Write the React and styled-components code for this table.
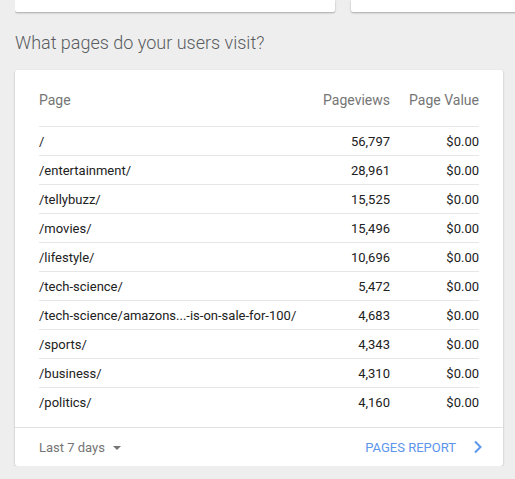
import React from "react";
import styled, { createGlobalStyle } from "styled-components";

const rows = [
  { page: "/", views: "56,797", value: "$0.00" },
  { page: "/entertainment/", views: "28,961", value: "$0.00" },
  { page: "/tellybuzz/", views: "15,525", value: "$0.00" },
  { page: "/movies/", views: "15,496", value: "$0.00" },
  { page: "/lifestyle/", views: "10,696", value: "$0.00" },
  { page: "/tech-science/", views: "5,472", value: "$0.00" },
  {
    page: "/tech-science/amazons...-is-on-sale-for-100/",
    views: "4,683",
    value: "$0.00"
  },
  { page: "/sports/", views: "4,343", value: "$0.00" },
  { page: "/business/", views: "4,310", value: "$0.00" },
  { page: "/politics/", views: "4,160", value: "$0.00" }
];

const GlobalStyle = createGlobalStyle`
  html, body {
    margin: 0;
    background: #eeeeee;
    font-family: Roboto, "Liberation Sans", Arial, sans-serif;
    overflow: hidden;
  }
`;

const Page = styled.div`
  width: 488px;
  padding: 0 0 0 15px;
`;

const TopRow = styled.div`
  display: flex;
  gap: 16px;
  width: 500px;
  padding-bottom: 3px;
  overflow: hidden;
`;

const StubCard = styled.div`
  flex: none;
  width: 320px;
  height: 12px;
  background: #fff;
  border-radius: 0 0 2px 2px;
  box-shadow: 0 1px 2px rgba(0, 0, 0, 0.3);
`;

const Heading = styled.h2`
  margin: 17px 0 0;
  height: 38px;
  line-height: 22px;
  font-size: 18px;
  font-weight: 300;
  color: #595c60;
`;

const Card = styled.div`
  background: #fff;
  border-radius: 2px;
  box-shadow: 0 1px 2px rgba(0, 0, 0, 0.3);
`;

const Body = styled.div`
  padding: 20px 24px 11px;
`;

const Row = styled.div`
  display: grid;
  grid-template-columns: 1fr 90px 89px;
  align-items: center;
  height: 28px;
  font-size: 13px;
  color: #212121;
  border-bottom: ${p => (p.$last ? "none" : "1px solid #e6e6e6")};
`;

const HeaderRow = styled(Row)`
  height: 20px;
  padding-bottom: 16px;
  font-size: 14px;
  color: #757575;
`;

const Cell = styled.div`
  text-align: ${p => (p.$right ? "right" : "left")};
  white-space: nowrap;
  overflow: hidden;
`;

const Footer = styled.div`
  display: flex;
  align-items: center;
  justify-content: space-between;
  height: 38px;
  padding: 0 20px 0 24px;
  border-top: 1px solid #e0e0e0;
  font-size: 13px;
`;

const Range = styled.div`
  display: flex;
  align-items: center;
  gap: 8px;
  color: #757575;
`;

const Caret = styled.span`
  width: 0;
  height: 0;
  border-left: 4px solid transparent;
  border-right: 4px solid transparent;
  border-top: 4px solid #757575;
  margin-top: 1px;
`;

const ReportLink = styled.a`
  display: flex;
  align-items: center;
  gap: 17px;
  color: #5b95ec;
  text-decoration: none;
`;

export default function App() {
  return (
    <>
      <GlobalStyle />
      <Page>
        <TopRow>
          <StubCard />
          <StubCard />
        </TopRow>
        <Heading>What pages do your users visit?</Heading>
        <Card>
          <Body>
            <HeaderRow>
              <Cell>Page</Cell>
              <Cell $right>Pageviews</Cell>
              <Cell $right>Page Value</Cell>
            </HeaderRow>
            {rows.map((r, i) => (
              <Row key={r.page} $last={i === rows.length - 1}>
                <Cell>{r.page}</Cell>
                <Cell $right>{r.views}</Cell>
                <Cell $right>{r.value}</Cell>
              </Row>
            ))}
          </Body>
          <Footer>
            <Range>
              Last 7 days
              <Caret />
            </Range>
            <ReportLink href="#">
              PAGES REPORT
              <svg width="10" height="14" viewBox="0 0 10 14">
                <path
                  d="M2 1.5 L7.5 7 L2 12.5"
                  fill="none"
                  stroke="#5b95ec"
                  strokeWidth="2"
                />
              </svg>
            </ReportLink>
          </Footer>
        </Card>
      </Page>
    </>
  );
}
